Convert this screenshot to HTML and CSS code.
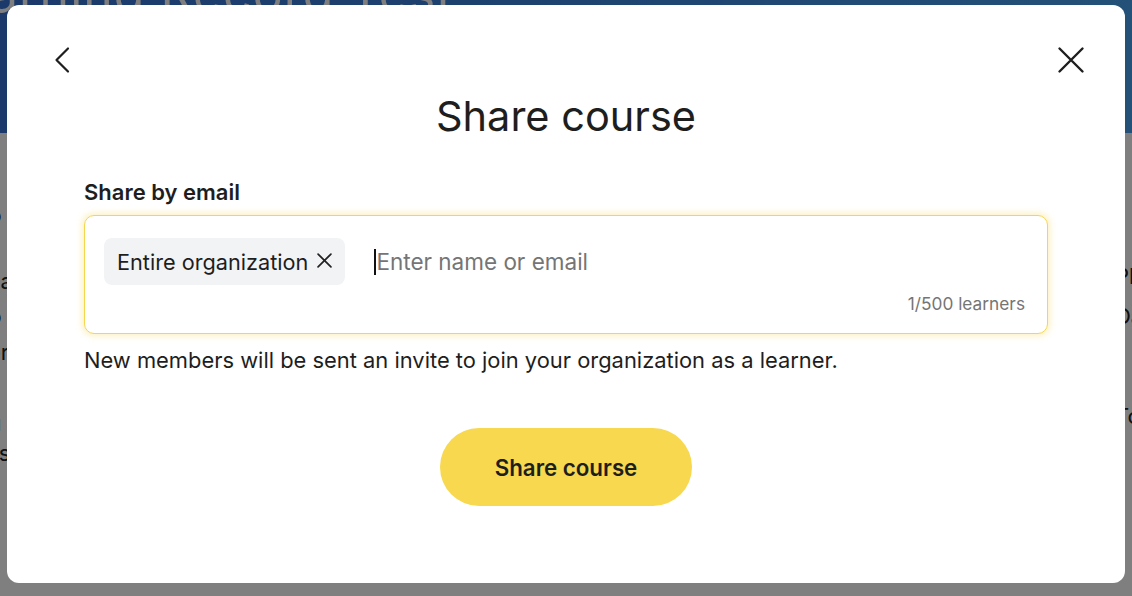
FILE: index.html
```html
<!DOCTYPE html>
<html lang="en">
<head>
<meta charset="utf-8">
<title>Share course</title>
<link rel="stylesheet" href="styles.css">
</head>
<body>
<div class="page">
  <header class="page-header">
    <h1 class="page-title">Learning Record Test</h1>
  </header>
  <main class="page-body">
    <div class="bg-col bg-left">
      <p class="l1">Info</p>
      <p class="l2">Location</p>
      <p class="l3">Info</p>
      <p class="l4">Intern</p>
      <p class="l5">You</p>
      <p class="l6">Finish</p>
    </div>
    <div class="bg-col bg-right">
      <p class="r1">Plan</p>
      <p class="r2">Date:</p>
      <p class="r3">Topic</p>
    </div>
  </main>
</div>
<div class="overlay"></div>
<div class="modal" role="dialog" aria-label="Share course">
  <div class="modal-top">
    <button class="icon-btn" aria-label="Back">
      <svg width="28" height="28" viewBox="0 0 28 28"><path d="M15 2.5 L3.5 14 L15 25.5" fill="none" stroke="#1e1e1e" stroke-width="2.2" stroke-linecap="round" stroke-linejoin="round"/></svg>
    </button>
    <button class="icon-btn" aria-label="Close">
      <svg width="28" height="28" viewBox="0 0 28 28"><path d="M2.5 2.5 L25.5 25.5 M25.5 2.5 L2.5 25.5" fill="none" stroke="#1e1e1e" stroke-width="2.4" stroke-linecap="round"/></svg>
    </button>
  </div>
  <h2 class="modal-title">Share course</h2>
  <div class="field">
    <label class="field-label">Share by email</label>
    <div class="input-box">
      <div class="input-row">
        <span class="chip">Entire organization
          <svg class="chip-x" width="14" height="14" viewBox="0 0 14 14"><path d="M1 1 L13 13 M13 1 L1 13" stroke="#222" stroke-width="1.6" stroke-linecap="round"/></svg>
        </span>
        <span class="caret"></span>
        <span class="placeholder">Enter name or email</span>
      </div>
      <div class="counter">1/500 learners</div>
    </div>
    <p class="helper">New members will be sent an invite to join your organization as a learner.</p>
  </div>
  <div class="actions">
    <button class="primary-btn">Share course</button>
  </div>
</div>
</body>
</html>
```
FILE: styles.css
```css
* { box-sizing: border-box; }
html, body { margin: 0; padding: 0; }
body {
  width: 1132px;
  height: 596px;
  overflow: hidden;
  font-family: Inter, "Noto Sans", sans-serif;
  color: #1e1e1e;
  background: #ffffff;
  position: relative;
}
.page { width: 1132px; height: 596px; display: flex; flex-direction: column; }
.page-header {
  height: 133px;
  background: linear-gradient(90deg, #3674d6 0%, #3c86e0 50%, #48a2f0 100%);
  position: relative;
  overflow: hidden;
}
.page-title {
  margin: -36px 0 0 -70px;
  font-weight: 400;
  font-size: 50px;
  color: #ffffff;
  letter-spacing: 1px;
  white-space: nowrap;
}
.page-body {
  flex: 1;
  display: flex;
  justify-content: space-between;
  background: #fff;
}
.bg-col p { margin: 0; font-size: 22px; color: #202020; white-space: nowrap; line-height: 22px; }
.bg-left { margin-left: -38px; padding-top: 71px; }
.bg-left .l2 { margin-top: 44px; }
.bg-left .l3 { margin-top: 13px; }
.bg-left .l4 { margin-top: 14px; }
.bg-left .l5 { margin-top: 49px; }
.bg-left .l6 { margin-top: 8px; }
.bg-right { margin-right: -40px; padding-top: 132px; text-align: left; }
.bg-right .r2 { margin-top: 18px; }
.bg-right .r3 { margin-top: 78px; }
.overlay {
  position: absolute;
  inset: 0;
  background: rgba(0, 0, 0, 0.5);
}
.modal {
  position: absolute;
  left: 7px;
  top: 5px;
  width: 1118px;
  height: 578px;
  background: #fff;
  border-radius: 12px;
  padding: 41px 40px 0 46px;
  display: flex;
  flex-direction: column;
}
.modal-top {
  display: flex;
  justify-content: space-between;
  height: 28px;
}
.icon-btn {
  background: none;
  border: 0;
  padding: 0;
  width: 28px;
  height: 28px;
  cursor: pointer;
}
.icon-btn svg { display: block; }
.modal-title {
  margin: 17px 0 0;
  text-align: center;
  font-weight: 400;
  font-size: 41.5px;
  line-height: 50px;
  color: #1e1e1e;
  padding-right: 6px;
}
.field { margin: 38px 0 0 31px; width: 964px; display: flex; flex-direction: column; }
.field-label { font-weight: 600; font-size: 22px; line-height: 26px; color: #1e1e1e; }
.input-box {
  margin-top: 10px;
  height: 119px;
  border: 1px solid #f5d64c;
  border-radius: 10px;
  box-shadow: 0 0 6px 2px rgba(247, 216, 79, 0.35);
  padding: 22px 22px 0 19px;
  display: flex;
  flex-direction: column;
}
.input-row { display: flex; align-items: center; height: 47px; }
.chip {
  display: inline-flex;
  align-items: center;
  gap: 9px;
  height: 47px;
  padding: 0 13px 0 13px;
  background: #f2f3f5;
  border-radius: 8px;
  font-size: 21.7px;
  color: #1e1e1e;
}
.chip-x { display: block; margin-top: -2px; width: 15px; height: 15px; }
.caret { width: 2px; height: 26px; background: #111; margin-left: 29px; }
.placeholder { font-size: 22.5px; color: #757575; margin-left: 0; }
.counter {
  margin-top: 8px;
  text-align: right;
  font-size: 17.3px;
  color: #757575;
  line-height: 22px;
}
.helper {
  margin: 12px 0 0;
  font-size: 21.9px;
  line-height: 28px;
  color: #1e1e1e;
}
.actions { display: flex; justify-content: center; margin-top: 54px; padding-right: 6px; }
.primary-btn {
  width: 252px;
  height: 78px;
  border: 0;
  border-radius: 39px;
  background: #f7d84f;
  font-family: Inter, "Noto Sans", sans-serif;
  font-weight: 600;
  font-size: 22.3px;
  color: #1e1e1e;
  cursor: pointer;
}
```
